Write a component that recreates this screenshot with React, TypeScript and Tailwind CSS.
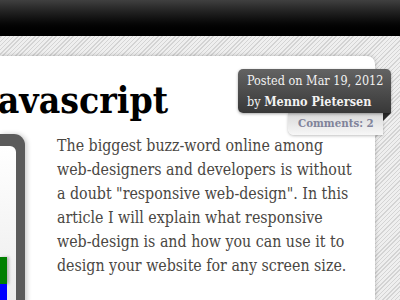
export default function App() {
  return (
    <div className="relative h-[300px] w-[400px] overflow-hidden bg-[repeating-linear-gradient(135deg,#efefef_0px,#efefef_2px,#d4d4d4_2px,#d4d4d4_3px)] font-['DejaVu_Serif',serif] [font-stretch:condensed]">
      {/* top bar */}
      <div className="h-[36px] bg-gradient-to-b from-[#404040] to-[#000000]" />

      {/* post card */}
      <div className="relative mt-[20px] mr-[25px] h-[244px] rounded-tr-[8px] bg-white shadow-[0_0_4px_rgba(0,0,0,0.25)]">
        <h1 className="ml-[-18px] pt-[24px] text-[37px] font-bold leading-[40px] text-black">Javascript</h1>

        <div className="mt-[14px] flex gap-[32px]">
          {/* phone mockup */}
          <div className="h-[170px] w-[25px] shrink-0 rounded-tr-[11px] bg-[#5b5b5b] pt-[12px] pr-[9px] shadow-[2px_0_5px_rgba(0,0,0,0.2)]">
            <div className="flex h-full flex-col justify-end rounded-tr-[6px] bg-gradient-to-b from-[#ffffff] to-[#ececec]">
              <div className="h-[27px] w-[7px] bg-[#008000] shadow-[2px_0_3px_rgba(0,0,0,0.25)]" />
              <div className="h-[20px] w-[7px] bg-[#0000ff]" />
            </div>
          </div>

          <p className="w-[304px] text-[15.8px] leading-[24px] text-[#4a4743]">
            The biggest buzz-word online among web-designers and developers is without a doubt "responsive web-design". In this article I will explain what responsive web-design is and how you can use it to design your website for any screen size.
          </p>
        </div>

        {/* comments tab */}
        <div className="absolute left-[288px] top-[57px] flex h-[22px] w-[95px] items-center rounded-bl-[6px] bg-gradient-to-b from-[#d9d9d9] to-[#f7f7f7] pl-[10px] shadow-[0_1px_3px_rgba(0,0,0,0.25)]">
          <span className="whitespace-nowrap text-[11.4px] font-bold text-[#80839a]">Comments: 2</span>
        </div>
        <div className="absolute left-[383px] top-[57px] h-0 w-0 border-t-[8px] border-r-[8px] border-t-[#2a2a2a] border-r-transparent" />

        {/* meta badge */}
        <div className="absolute left-[238px] top-[13px] h-[44px] w-[153px] rounded-[5px] rounded-br-none bg-gradient-to-b from-[#636363] to-[#383838] pl-[9px] pt-[1px] text-[12.5px] leading-[21px] whitespace-nowrap text-[#f2f2f2] shadow-[0_1px_3px_rgba(0,0,0,0.35)]">
          <div>Posted on Mar 19, 2012</div>
          <div>
            by <span className="font-bold">Menno Pietersen</span>
          </div>
        </div>
      </div>
    </div>
  );
}
